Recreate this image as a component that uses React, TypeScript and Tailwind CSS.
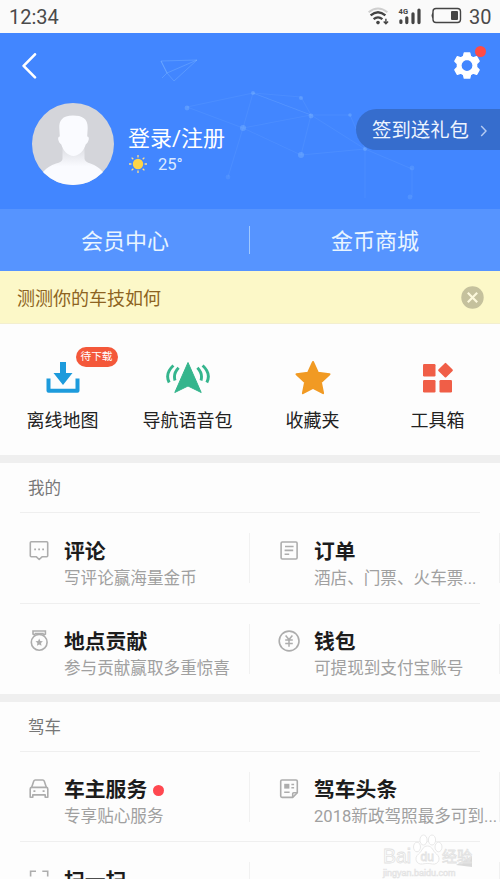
import type { ReactNode } from "react";

type Item = {
  title: string;
  desc: string;
  icon: ReactNode;
  dot?: boolean;
};

const CommentIcon = () => (
  <svg width="22" height="22" viewBox="0 0 22 22" fill="none" stroke="#adadad" strokeWidth="1.6" strokeLinejoin="round">
    <path d="M3.3 1.8h15.4q1 0 1 1v13q0 1-1 1H14l-2.8 2.7-2.8-2.7H3.300q-1 0-1-1v-13q0-1 1-1z" />
    <path d="M6.2 9.400H8M10.200 9.400H12M14.200 9.400H16" strokeWidth="1.8" />
  </svg>
);

const OrderIcon = () => (
  <svg width="22" height="22" viewBox="0 0 22 22" fill="none" stroke="#adadad" strokeWidth="1.6">
    <rect x="3.100" y="2" width="16" height="17" rx="1.2" />
    <path d="M7 6.5h8.600M6.600 10.400h8.600M6.600 14.300h4.600" />
  </svg>
);

const MedalIcon = () => (
  <svg width="22" height="22" viewBox="0 0 22 22" fill="none" stroke="#adadad" strokeWidth="1.6">
    <path d="M7 5.200 5 4V1h12.400v3l-2 1.200M6.600 3.600h9.200" />
    <circle cx="11.200" cy="12.300" r="7.900" />
    <path d="m11.200 8.600 1.100 2.400 2.600.3-1.900 1.800.5 2.600-2.300-1.300-2.300 1.300.5-2.600-1.900-1.800 2.600-.3z" fill="#adadad" stroke="none" />
  </svg>
);

const WalletIcon = () => (
  <svg width="22" height="22" viewBox="0 0 22 22" fill="none" stroke="#adadad" strokeWidth="1.6">
    <circle cx="11.100" cy="11" r="9.900" />
    <path d="m7.600 5.600 3.400 4 3.400-4M11 9.600v7.200M7.200 10h7.600M7.200 13.400h7.600" strokeWidth="1.500" />
  </svg>
);

const CarIcon = () => (
  <svg width="22" height="22" viewBox="0 0 22 22" fill="none" stroke="#adadad" strokeWidth="1.6" strokeLinejoin="round">
    <path d="M3.600 9.600 5.800 3q.4-1 1.400-1h7.600q1 0 1.400 1l2.200 6.600" />
    <path d="M2.200 19.300V11q0-1.600 1.600-1.600h14.400q1.600 0 1.600 1.600v8.300h-2.600v-2.400H4.800v2.400z" />
    <path d="M5.400 13.200h2M14.600 13.200h2" strokeWidth="1.800" />
  </svg>
);

const NewsIcon = () => (
  <svg width="22" height="22" viewBox="0 0 22 22" fill="none" stroke="#adadad" strokeWidth="1.6" strokeLinejoin="round">
    <path d="M4 2h14q1.300 0 1.300 1.300v11.400l-4.600 4.700H4q-1.300 0-1.300-1.300V3.300Q2.700 2 4 2z" />
    <path d="M19.200 14.700h-3.500q-1 0-1 1v3.600" />
    <rect x="6.200" y="5.800" width="5.200" height="4.800" fill="#adadad" stroke="none" />
    <path d="M13.400 6.600h2.700M13.400 9.800h2.700M6.200 14.200h5.400" strokeWidth="1.500" />
  </svg>
);

const ScanIcon = () => (
  <svg width="22" height="22" viewBox="0 0 22 22" fill="none" stroke="#adadad" strokeWidth="1.6">
    <path d="M2.600 7.500V2.300H8M14.300 2.300h5.400v5.200M2.600 13.500v5.200H8M14.300 18.700h5.400v-5.200" />
  </svg>
);

const mine: Item[][] = [
  [
    { title: "评论", desc: "写评论赢海量金币", icon: <CommentIcon /> },
    { title: "订单", desc: "酒店、门票、火车票...", icon: <OrderIcon /> },
  ],
  [
    { title: "地点贡献", desc: "参与贡献赢取多重惊喜", icon: <MedalIcon /> },
    { title: "钱包", desc: "可提现到支付宝账号", icon: <WalletIcon /> },
  ],
];

const driving: Item[][] = [
  [
    { title: "车主服务", desc: "专享贴心服务", icon: <CarIcon />, dot: true },
    { title: "驾车头条", desc: "2018新政驾照最多可到...", icon: <NewsIcon /> },
  ],
  [{ title: "扫一扫", desc: "", icon: <ScanIcon /> }],
];

function StatusBar() {
  return (
    <div className="flex h-[33px] shrink-0 items-center bg-[#fafafa] pr-2 pl-[9px] text-[20px] text-[#4a4a4a]">
      <span className="leading-none">12:34</span>
      <svg className="ml-auto" width="97" height="24" viewBox="0 0 97 24" fill="none">
        {/* wifi */}
        <path d="M1.600 7.200Q11 -.2 20.400 7.200" stroke="#cfcfcf" strokeWidth="1.900" />
        <path d="M3.600 10.400Q11 4 18.400 10.400M6.600 14.200q4.400-3.600 8.800 0" stroke="#444" strokeWidth="2.300" />
        <circle cx="11" cy="17.600" r="1.800" fill="#444" />
        <path d="M18.900 13.700v5M16.700 16.500l2.200 2.200 2.200-2.200" stroke="#444" strokeWidth="1.400" />
        {/* signal */}
        <text x="31.600" y="8.600" fontSize="7.500" fontWeight="700" fill="#444">4G</text>
        <path d="M33.900 15.800v1.600M39.800 12.800v4.800M46 8.800v8.800M52 5v12.600" stroke="#444" strokeWidth="3.200" strokeLinecap="round" />
        {/* battery */}
        <rect x="66" y="3.500" width="27.500" height="14" rx="3" stroke="#444" strokeWidth="1.400" />
        <path d="M66 7.200q-3 3.300 0 6.600z" fill="#444" />
        <rect x="84" y="6" width="7" height="9" rx="1" fill="#444" />
      </svg>
      <span className="ml-[5px] w-[23px] leading-none">30</span>
    </div>
  );
}

function Network() {
  return (
    <svg className="absolute inset-0" width="500" height="176" viewBox="0 0 500 176" fill="none">
      <path d="m161 28 36-1-23 21-7-8zM161 28l6 12 30-13M167 40l-5 5" stroke="#8fc4ff" strokeOpacity=".4" strokeWidth=".8" />
      <path
        d="m187 74 66-14 48 4 10 18 39 0 15 34-54-34-58-22-10 35 68-13M187 74l56 21 58 27 64-6 47 20v28M243 95l-15 49M311 82l-10 40M253 60l58 22M365 115v50"
        stroke="#9bcaff"
        strokeOpacity=".13"
        strokeWidth=".8"
      />
      <g fill="#8ec4ff" fillOpacity=".32">
        <circle cx="187" cy="75" r="2.400" />
        <circle cx="253" cy="60" r="2" />
        <circle cx="301" cy="65" r="2" />
        <circle cx="311" cy="83" r="2.400" />
        <circle cx="350" cy="82" r="1.800" />
        <circle cx="243" cy="95" r="3" />
        <circle cx="301" cy="122" r="3" />
        <circle cx="228" cy="144" r="2.400" fillOpacity=".15" />
        <circle cx="365" cy="116" r="2" />
        <circle cx="412" cy="135" r="2.400" fillOpacity=".2" />
        <circle cx="410" cy="164" r="2.400" fillOpacity=".2" />
      </g>
    </svg>
  );
}

function Header() {
  return (
    <header className="relative flex h-[176px] shrink-0 flex-col bg-[#4286ff]">
      <Network />
      <div className="relative flex h-[65px] items-center justify-between pr-[13px] pl-[20px]">
        <svg width="18" height="26" viewBox="0 0 18 26" fill="none" stroke="#fff" strokeWidth="2.600" strokeLinecap="round" strokeLinejoin="round">
          <path d="M15 1.300 3.600 12.800 15 24.300" />
        </svg>
        <div className="relative p-[6px]">
          <svg width="28" height="28" viewBox="0 0 28 28" fill="#fff">
            <path
              fillRule="evenodd"
              stroke="#fff"
              strokeWidth="1.400"
              strokeLinejoin="round"
              d="M11.300.9h5.400l.8 3.400 2.600 1.500 3.500-1.100 2.500 4.500-2.500 2.500v3.600l2.500 2.500-2.500 4.500-3.500-1.100-2.600 1.500-.8 3.400h-5.400l-.8-3.400-2.600-1.500-3.500 1.100-2.500-4.500 2.500-2.500v-3.600L1.900 9.200l2.500-4.500 3.500 1.100 2.600-1.500zM14 7.400a6.100 6.100 0 1 0 0 12.200 6.100 6.100 0 0 0 0-12.200z"
            />
          </svg>
          <span className="absolute top-[0px] right-[1px] size-[11px] rounded-full bg-[#ff4b45]" />
        </div>
      </div>

      <div className="relative flex items-start pt-[5px] pl-[32px]">
        <svg width="82" height="82" viewBox="0 0 82 82">
          <defs>
            <clipPath id="avatar">
              <circle cx="41" cy="41" r="41" />
            </clipPath>
            <linearGradient id="neck" x1="0" y1="0" x2="0" y2="1">
              <stop offset="0" stopColor="#dedfe4" />
              <stop offset=".5" stopColor="#fafbff" />
            </linearGradient>
          </defs>
          <circle cx="41" cy="41" r="41" fill="#d4d5da" />
          <g clipPath="url(#avatar)">
            <path d="M30.500 45h22v11q1 3 6 4.500Q66 63 71 69v13H11V69q5-6 13-8.500 6-1.500 6.500-4.500z" fill="url(#neck)" />
            <path d="M41 12.500c9 0 15 3 14.700 12.500l-.5 8.500c3 0 1.500 6-1.500 8C52 48 46.500 53 41.500 53S31 48 29.300 41.500c-3-2-4.500-8-1.500-8L27.300 25C27 18 30 12.500 41 12.500z" fill="#fafbff" />
          </g>
        </svg>
        <div className="ml-[14px] pt-[22px]">
          <div className="text-[22px] leading-[28px] text-white">登录/注册</div>
          <div className="flex h-[22px] items-center">
            <svg width="20" height="20" viewBox="0 0 20 20">
              <circle cx="10" cy="10" r="5.200" fill="#ffd548" />
              <path d="M10 1v2.400M10 16.600V19M1 10h2.400M16.600 10H19M3.600 3.600l1.700 1.700M14.700 14.700l1.700 1.700M3.600 16.400l1.700-1.700M14.700 5.300l1.700-1.700" stroke="#ffe08a" strokeWidth="1.300" />
            </svg>
            <span className="mt-[2px] ml-[10px] text-[16.5px] leading-none text-[#dceaff]">25°</span>
          </div>
        </div>
        <button className="mt-[6px] ml-auto flex h-[41px] w-[144px] items-center rounded-l-full bg-[#366dcd] pt-[2px] pl-[16px] text-[19.4px] text-[#eef5ff]">
          <span className="whitespace-nowrap">签到送礼包</span>
          <svg className="ml-[11px]" width="8" height="12" viewBox="0 0 8 12" fill="none" stroke="#b5cbf2" strokeWidth="1.400">
            <path d="m1.200 1 4.800 5-4.800 5" />
          </svg>
        </button>
      </div>
    </header>
  );
}

function Shortcut({ label, badge, children }: { label: string; badge?: string; children: ReactNode }) {
  return (
    <div className="flex flex-col items-center pt-[31px]">
      <div className="relative">
        <svg width="46" height="44" viewBox="0 0 46 44">
          {children}
        </svg>
        {badge && (
          <span className="absolute top-[-8px] left-[36px] flex h-[20px] w-[42px] items-center justify-center rounded-full bg-[#f4583a] pt-px text-[10.700px] whitespace-nowrap text-white">
            {badge}
          </span>
        )}
      </div>
      <span className="mt-[8px] text-[18px] leading-[28px] text-[#222]">{label}</span>
    </div>
  );
}

function Cell({ item }: { item: Item }) {
  return (
    <div className="flex w-1/2 pt-[25.500px] pl-[28px]">
      <div className="mt-[2px] w-[22px] shrink-0">{item.icon}</div>
      <div className="ml-[14px] min-w-0 whitespace-nowrap">
        <div className="flex items-center text-[20.8px] leading-[28px] font-bold text-[#1c1c1c]">
          {item.title}
          {item.dot && <span className="ml-[6px] size-[11px] rounded-full bg-[#ff4850]" />}
        </div>
        <div className="text-[16.6px] leading-[26px] text-[#a0a0a0]">{item.desc}</div>
      </div>
    </div>
  );
}

function Section({ title, rows }: { title: string; rows: Item[][] }) {
  return (
    <section className="shrink-0 border-t-8 border-[#efefef] pb-[0.5px]">
      <h2 className="flex h-[49px] items-center pt-[4px] pl-[28px] text-[16.5px] text-[#777]">{title}</h2>
      {rows.map((row) => (
        <div key={row[0].title} className="relative flex h-[90.5px]">
          <div className="absolute top-0 right-[20px] left-[20px] h-px bg-[#efefef]" />
          <div className="absolute top-[21px] left-[249px] h-[50px] w-px bg-[#f1f1f1]" />
          <div className="absolute top-[21px] right-0 h-[50px] w-px bg-[#f1f1f1]" />
          {row.map((item) => (
            <Cell key={item.title} item={item} />
          ))}
        </div>
      ))}
    </section>
  );
}

function Watermark() {
  return (
    <svg className="absolute right-[10px] bottom-0" width="110" height="46" viewBox="0 0 110 46" fill="#fff" stroke="#e2e2e2" strokeWidth=".8">
      <text x="3" y="30" fontSize="19.500" fontFamily="Liberation Sans">Bai</text>
      <ellipse cx="37" cy="14" rx="3.500" ry="4.800" />
      <ellipse cx="43.500" cy="7" rx="3.600" ry="5" />
      <ellipse cx="52" cy="7" rx="3.600" ry="5" />
      <ellipse cx="58.500" cy="14" rx="3.500" ry="4.800" />
      <path d="M47.500 13c5 0 5 5 9 8 5 4 2 11-4 10-4-.7-6-.7-10 0-6 1-9-6-4-10 4-3 4-8 9-8z" />
      <text x="40.500" y="28" fontSize="12" fontFamily="Liberation Sans">du</text>
      <path d="m76 32 16-9v11z" fill="#d9d9d9" stroke="none" />
      <text x="62" y="29" fontSize="15">经验</text>
      <text x="3" y="42.500" fontSize="9" fill="#f0f0f0" fontFamily="Liberation Sans" strokeWidth=".5">jingyan.baidu.com</text>
    </svg>
  );
}

export default function App() {
  return (
    <main className="relative flex h-[879px] w-[500px] flex-col overflow-hidden bg-[#fdfdfd] font-[Roboto,'Noto_Sans_CJK_SC',sans-serif]">
      <StatusBar />
      <Header />

      <nav className="relative grid h-[62px] shrink-0 grid-cols-2 items-center bg-[#5694ff] pt-[2px] text-center text-[22px] text-[#e9f5ff]">
        <span>会员中心</span>
        <span>金币商城</span>
        <i className="absolute top-[17px] left-[249px] h-[28px] w-px bg-[#9fc8ff]" />
      </nav>

      <div className="flex h-[53px] shrink-0 items-center justify-between border-b border-[#f3efcf] bg-[#fcf8c8] pr-[16px] pl-[17px] text-[18px] text-[#8d6322]">
        <span className="pt-[2px]">测测你的车技如何</span>
        <svg width="23" height="23" viewBox="0 0 23 23" fill="none">
          <circle cx="11.500" cy="11.500" r="11.200" fill="#c5c19d" />
          <path d="m6.800 6.800 9.400 9.400M16.200 6.800l-9.400 9.400" stroke="#fcf8dc" strokeWidth="2.200" />
        </svg>
      </div>

      <div className="grid h-[131px] shrink-0 grid-cols-4">
        <Shortcut label="离线地图" badge="待下载">
          <path d="M20 7h6v11h6.500L23 30 13.500 18H20z" fill="#1d9bdc" />
          <path d="M8.500 23.500v12.300h29V23.500" fill="none" stroke="#1d9bdc" strokeWidth="4" strokeLinejoin="round" />
        </Shortcut>
        <Shortcut label="导航语音包">
          <path d="m23 7.500 13.200 30L23 31 9.800 37.500z" fill="#35b58d" stroke="#35b58d" strokeLinejoin="round" />
          <g fill="none" stroke="#35b58d" strokeWidth="2.900">
            <path d="M8.400 10.500Q-.4 18.500 4.200 27.500M13.600 12.800Q8 18.500 10 25.500" />
            <path d="M37.600 10.500Q46.400 18.500 41.800 27.500M32.400 12.800Q38 18.500 36 25.500" />
          </g>
        </Shortcut>
        <Shortcut label="收藏夹">
          <path d="m23 7 5 10.800 11.500 1.400-8.600 8 2.200 11L23 32.800 12.900 38.200l2.200-11-8.600-8L18 17.800z" fill="#f19a23" stroke="#f19a23" strokeWidth="2" strokeLinejoin="round" />
        </Shortcut>
        <Shortcut label="工具箱">
          <g fill="#f05e47">
            <rect x="8" y="9" width="12.500" height="12.500" rx="1.200" />
            <rect x="8" y="25" width="12.500" height="12.500" rx="1.200" />
            <rect x="24.500" y="25" width="12.500" height="12.500" rx="1.200" />
            <rect x="25" y="9.700" width="11" height="11" rx="1" transform="rotate(45 30.500 15.200)" />
          </g>
        </Shortcut>
      </div>

      <Section title="我的" rows={mine} />
      <Section title="驾车" rows={driving} />
      <Watermark />
    </main>
  );
}
